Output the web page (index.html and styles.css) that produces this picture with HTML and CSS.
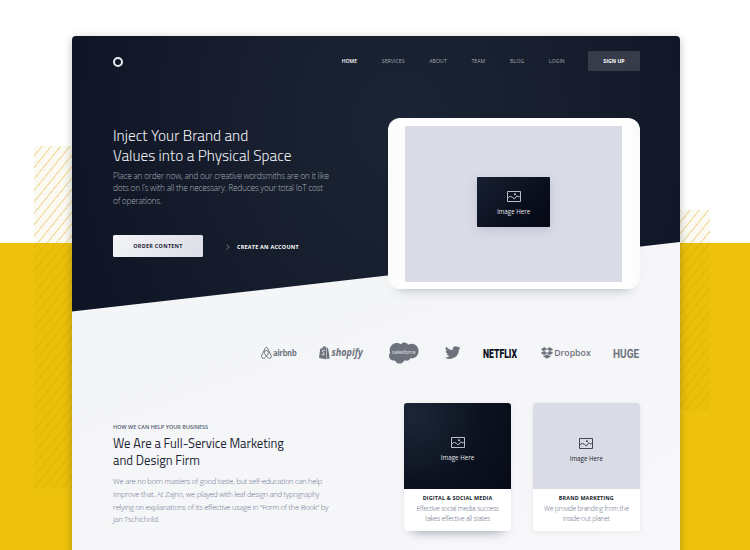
FILE: index.html
```html
<!DOCTYPE html>
<html lang="en">
<head>
<meta charset="utf-8">
<title>Full-Service Marketing and Design</title>
<link rel="stylesheet" href="styles.css">
</head>
<body>
<svg class="defs" aria-hidden="true">
  <symbol id="picture" viewBox="0 0 14 11">
    <path d="M.5.5h13v10H.5zM.8 7.2 3 5.200l1 1 .9-.6 2.400 2.500 2.600-3.400 1.300 1.400 1-.8 1.400 1.400" fill="none" stroke="currentColor" stroke-width=".8"/>
    <circle cx="8" cy="3.2" r=".9" fill="currentColor"/>
  </symbol>
</svg>
<div class="stripes stripes-left"></div>
<div class="stripes stripes-right"></div>
<main class="sheet">
  <header class="topbar">
    <a class="brand"></a>
    <nav class="nav">
      <a class="active">HOME</a><a>SERVICES</a><a>ABOUT</a><a>TEAM</a><a>BLOG</a><a>LOGIN</a>
      <a class="signup">SIGN UP</a>
    </nav>
  </header>
  <section class="hero">
    <div class="pitch">
      <h1>Inject Your Brand and<br>Values into a Physical Space</h1>
      <p>Place an order now, and our creative wordsmiths are on it like<br>dots on I’s with all the necessary. Reduces your total IoT cost<br>of operations.</p>
      <div class="actions">
        <a class="order">ORDER CONTENT</a>
        <a class="create"><svg width="4" height="6" viewBox="0 0 4 6"><path d="M.7.5 3.1 3 .7 5.5" fill="none" stroke="#8b919c" stroke-width=".8"/></svg>CREATE AN ACCOUNT</a>
      </div>
    </div>
    <div class="tablet">
      <div class="screen">
        <div class="tile"><svg width="14" height="11"><use href="#picture"/></svg><span>Image Here</span></div>
      </div>
    </div>
  </section>
  <section class="clients">
    <svg class="logo-airbnb" width="36" height="14" viewBox="0 0 36 14">
      <path d="M5.4 10.2C4 8.500 3.400 7.500 3.400 6.500a2 2 0 0 1 4 0c0 1-.6 2-2 3.700-1.500 1.800-2.500 2.300-3.500 2C.6 11.900.2 10.700.8 9.300L4.200 2.300c.6-1.300 1.800-1.300 2.400 0L10 9.300c.6 1.400.2 2.600-1.100 2.900-1 .3-2-.2-3.500-2z" fill="none" stroke="#6d727d" stroke-width="1"/>
      <text class="airbnb" x="12.200" y="10.200" textLength="23.500" lengthAdjust="spacingAndGlyphs">airbnb</text>
    </svg>
    <svg class="logo-shopify" width="44" height="16" viewBox="0 0 44 16">
      <path d="M1.200 3.800 3 3.200C3.600 1.500 4.500.7 5.600 1l.8.9.9.2V14.200L0 12.900zM7.800 2.300l1.400 1.200 1.500 9.900-2.900.7z" fill="#6d727d"/>
      <path d="M3 3.400C3.600 1.800 4.600 1.300 5.200 2v1" fill="none" stroke="#f5f6f8" stroke-width=".4"/>
      <path d="M5.700 5.400c-1.200-.5-2.300 0-2.300 1s1.800 1.200 1.800 2.400c0 1.100-1.400 1.300-2.500.6" fill="none" stroke="#f5f6f8" stroke-width="1"/>
      <text class="shopify" x="12.500" y="10.600" textLength="31.300" lengthAdjust="spacingAndGlyphs">shopify</text>
    </svg>
    <svg class="logo-salesforce" width="31" height="22" viewBox="0 0 31 22">
      <path d="M12.800 2.300C15-.4 18.500-.1 20.100 2.700 25-.1 30.600 3.400 30.600 9c0 5-4 8-8.100 7.200-1.400 2.500-4 3-6 2-2 4.500-8 4.400-9.600.2C3.500 19 .9 16.600 1 13.700c0-1.200.4-2.100 1.100-2.900C-.2 4.200 7-2 12.800 2.300z" fill="#6d727d"/>
      <text class="salesforce" x="4" y="11.700" textLength="23.500" lengthAdjust="spacingAndGlyphs">salesforce</text>
    </svg>
    <svg class="logo-twitter" width="15.500" height="13" viewBox="0 0 24 20">
      <path d="M24 2.600a9.800 9.800 0 0 1-2.800.8A4.900 4.900 0 0 0 23.300.7a9.900 9.900 0 0 1-3.100 1.200 4.900 4.900 0 0 0-8.400 4.500A14 14 0 0 1 1.700 1.200a4.900 4.900 0 0 0 1.500 6.600 4.900 4.900 0 0 1-2.200-.6 4.900 4.900 0 0 0 3.900 4.900 5 5 0 0 1-2.200.1 4.900 4.900 0 0 0 4.600 3.400A9.900 9.900 0 0 1 0 17.600 14 14 0 0 0 21.500 5.200 10 10 0 0 0 24 2.600z" fill="#6d727d"/>
    </svg>
    <svg class="logo-netflix" width="34" height="14" viewBox="0 0 34 14">
      <text class="netflix" x="0" y="12" textLength="34" lengthAdjust="spacingAndGlyphs">NETFLIX</text>
    </svg>
    <svg class="logo-dropbox" width="50" height="14" viewBox="0 0 50 14">
      <path d="M3.300 1.200 6 3 3 5.100 0 3.400zM8.700 1.200 12 3.400 9 5.100 6 3zM0 7 3 5.100 6 7 3.300 8.900zM12 7 9 5.100 6 7l2.700 1.900zM6 8.500l2.700 1.500.7-.4v.9L6 12.600l-3.400-2.100v-.9l.7.400z" fill="#6d727d" stroke="#6d727d" stroke-width=".3"/>
      <text class="dropbox" x="13.200" y="10.400" textLength="36.500" lengthAdjust="spacingAndGlyphs">Dropbox</text>
    </svg>
    <svg class="logo-huge" width="26.500" height="14" viewBox="0 0 26.500 14">
      <text class="huge" x="0" y="12.200" textLength="26.200" lengthAdjust="spacingAndGlyphs">HUGE</text>
    </svg>
  </section>
  <section class="services">
    <div class="about">
      <h6>HOW WE CAN HELP YOUR BUSINESS</h6>
      <h2>We Are a Full-Service Marketing<br>and Design Firm</h2>
      <p>We are no born masters of good taste, but self-education can help<br>improve that. At Zajno, we played with leaf design and typography<br>relying on explanations of its effective usage in “Form of the Book” by<br>Jan Tschichold.</p>
    </div>
    <article class="card raised">
      <div class="thumb dark"><svg width="14" height="11"><use href="#picture"/></svg><span>Image Here</span></div>
      <h3>DIGITAL &amp; SOCIAL MEDIA</h3>
      <p>Effective social media success<br>takes effective all states</p>
    </article>
    <article class="card">
      <div class="thumb light"><svg width="14" height="11"><use href="#picture"/></svg><span>Image Here</span></div>
      <h3>BRAND MARKETING</h3>
      <p>We provide branding from the<br>inside-out planet</p>
    </article>
  </section>
</main>
</body>
</html>
```
FILE: styles.css
```css
* { box-sizing: border-box; margin: 0; padding: 0; }

body {
  position: relative;
  width: 750px;
  height: 550px;
  overflow: hidden;
  padding: 36px 70px 0 72px;
  background: linear-gradient(#fff 243px, #eec20c 243px);
  font-family: "Open Sans", "Noto Sans", sans-serif;
}

svg { display: block; flex: none; overflow: visible; }
.defs { position: absolute; width: 0; height: 0; }

.stripes {
  position: absolute;
  background: repeating-linear-gradient(129deg,
    rgba(170, 155, 0, .05) 0 5.500px,
    rgba(215, 162, 0, .36) 6.100px 6.900px,
    rgba(170, 155, 0, .05) 7.200px);
}
.stripes-left { left: 34px; top: 146px; width: 60px; height: 343px; }
.stripes-right { left: 654px; top: 210px; width: 56px; height: 200px; }

.sheet {
  position: relative;
  width: 608px;
  height: 530px;
  padding: 0 40px 0 41px;
  border-radius: 4px 4px 0 0;
  background: linear-gradient(160deg, #f4f5f7 50%, #f8f8fa);
  box-shadow: 0 2px 9px rgba(30, 32, 30, .28);
}
.sheet::before {
  content: "";
  position: absolute;
  inset: 0 0 auto;
  height: 276px;
  border-radius: 4px 4px 0 0;
  background: radial-gradient(ellipse 340px 400px at 54% 32%, #1a2434 0%, #181f2e 40%, #0f1524 100%);
  clip-path: polygon(0 0, 100% 0, 100% 206px, 0 275.500px);
}
.sheet > * { position: relative; }

.topbar {
  display: flex;
  align-items: center;
  justify-content: space-between;
  height: 50px;
}
.brand {
  width: 10px;
  height: 10px;
  margin-top: 2px;
  border: 2px solid #e9ebf0;
  border-radius: 50%;
}
.nav {
  display: flex;
  align-items: center;
  gap: 24.700px;
  color: #a0a5ae;
  font-size: 5.250px;
  line-height: 8px;
}
.nav .active { color: #fff; font-weight: 600; font-size: 5.100px; }
.nav .signup {
  width: 52px;
  margin-left: -1.500px;
  border-radius: 1.500px;
  background: #373c4a;
  color: #fff;
  font-weight: 700;
  font-size: 5.250px;
  line-height: 20px;
  text-align: center;
}

.hero {
  display: flex;
  justify-content: space-between;
  height: 203px;
  padding-top: 32px;
}
.pitch { padding-top: 8px; }
h1 {
  color: #eef0f4;
  font: 300 15.300px/20px "Titillium Web", Roboto, sans-serif;
}
.pitch p {
  margin-top: 3.500px;
  color: #a9aeb8;
  font-weight: 300;
  font-size: 8.400px;
  line-height: 12.700px;
  letter-spacing: -.26px;
}
.actions {
  display: flex;
  align-items: center;
  gap: 23px;
  margin-top: 27.800px;
  font-weight: 700;
}
.order {
  width: 90px;
  border-radius: 1.500px;
  background: linear-gradient(110deg, #f2f3f6, #dcdee8);
  color: #1b2232;
  font-size: 5.400px;
  line-height: 22px;
  letter-spacing: .3px;
  text-align: center;
}
.create {
  display: flex;
  align-items: center;
  gap: 7px;
  padding-top: 1px;
  color: #fff;
  font-size: 5.500px;
  letter-spacing: .2px;
}

.tablet {
  width: 252.500px;
  height: 171px;
  padding: 7.500px 17.800px 7.500px 17.500px;
  border-radius: 12px;
  background: linear-gradient(90deg, #fafbfb, #fff 8%, #fff 92%, #fafafb);
  box-shadow: 0 10px 12px -10px rgba(30, 45, 65, .35);
}
.screen {
  display: grid;
  place-items: center;
  height: 156px;
  background: #d9dbe5;
}
.tile {
  display: flex;
  flex-direction: column;
  align-items: center;
  gap: 4.500px;
  width: 73px;
  height: 50px;
  margin-bottom: 2.500px;
  padding-top: 14px;
  border-radius: 1px;
  background: linear-gradient(135deg, #172031, #0a0f1d 60%, #060914);
  color: #e6e8ec;
  font-size: 6.200px;
  line-height: 9px;
  box-shadow: 0 3px 9px rgba(150, 145, 185, .35);
}

.clients {
  display: flex;
  align-items: center;
  height: 24px;
  margin: 51.500px 0 0 147.700px;
}
.clients text { fill: #6d727d; font-family: Lato, sans-serif; font-weight: 700; }
.logo-shopify { margin-left: 22px; }
.logo-salesforce { margin-left: 25px; }
.logo-twitter { margin-left: 26px; }
.logo-netflix { margin-left: 22.700px; }
.logo-dropbox { margin-left: 24px; }
.logo-huge { margin-left: 22px; }
.clients .airbnb { font-size: 9.200px; font-weight: 900; }
.clients .shopify { font-family: "Open Sans", sans-serif; font-style: italic; font-size: 10.500px; }
.clients .salesforce { fill: #e9ebef; font-family: "Open Sans", sans-serif; font-weight: 400; font-size: 5.500px; }
.clients .netflix { fill: #0b1122; font-family: Roboto, sans-serif; font-weight: 900; font-size: 13.300px; }
.clients .dropbox { font-family: "Open Sans", sans-serif; font-weight: 600; font-size: 9.300px; }
.clients .huge { font-family: Roboto, sans-serif; font-weight: 700; font-size: 13.600px; }

.services {
  display: flex;
  align-items: flex-start;
  gap: 21.500px;
  margin-top: 38px;
}
.about { flex: 1; padding-top: 20.500px; white-space: nowrap; }
h6 { color: #505c70; font-weight: 600; font-size: 5.500px; line-height: 9px; }
h2 {
  margin-top: 3px;
  color: #1d2535;
  font: 400 12.750px/17px "Titillium Web", Roboto, sans-serif;
}
.about p {
  margin-top: 6px;
  color: #64708a;
  font-weight: 300;
  font-size: 7.600px;
  line-height: 12.800px;
  letter-spacing: -.26px;
}

.card {
  width: 107.300px;
  height: 128px;
  border-radius: 3px;
  background: #fff;
  text-align: center;
  box-shadow: 0 1px 5px rgba(60, 70, 95, .09);
}
.card.raised { box-shadow: 0 10px 10px -9px rgba(35, 50, 75, .4), 0 1px 6px rgba(60, 70, 95, .07); }
.thumb {
  display: flex;
  flex-direction: column;
  align-items: center;
  gap: 4.500px;
  height: 86px;
  padding-top: 34.500px;
  border-radius: 3px 3px 0 0;
  font-size: 6.200px;
  line-height: 9px;
}
.thumb.dark { background: radial-gradient(circle at 10% 15%, #1c2636, #0c1220 55%, #070b17); color: #e6e8ec; }
.thumb.light { padding-top: 35.500px; background: #d9dbe5; color: #1d2433; }
.card h3 {
  margin-top: 5px;
  color: #131a2a;
  font-weight: 700;
  font-size: 5.400px;
  line-height: 9px;
  letter-spacing: .15px;
}
.card p {
  margin-top: 1.800px;
  color: #626c7f;
  font-weight: 300;
  font-size: 6.800px;
  line-height: 9.400px;
  letter-spacing: -.27px;
}
```
